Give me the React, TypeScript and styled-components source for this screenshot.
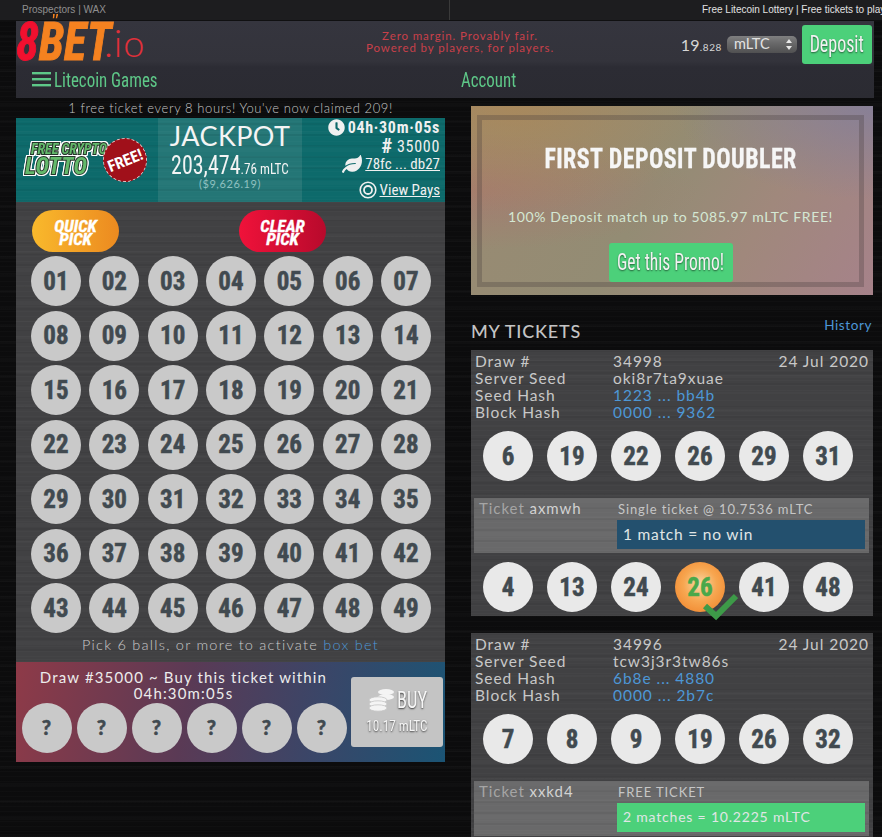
import React from "react";
import styled, { createGlobalStyle } from "styled-components";
import { FaClock, FaLeaf } from "react-icons/fa";

const brushed = `repeating-linear-gradient(0deg, rgba(255,255,255,0.016) 0 1px, rgba(0,0,0,0) 1px 5px),
  repeating-linear-gradient(0deg, rgba(0,0,0,0.05) 0 2px, rgba(0,0,0,0) 2px 11px),
  repeating-linear-gradient(0deg, rgba(255,255,255,0.014) 0 3px, rgba(0,0,0,0) 3px 17px)`;

const narrow = `"Liberation Sans Narrow", "Roboto Condensed", "Liberation Sans", sans-serif`;
const round = `Lato, "Open Sans", sans-serif`;

const GlobalStyle = createGlobalStyle`
  html, body {
    margin: 0;
    padding: 0;
    height: 100%;
    overflow: hidden;
    background-color: #0c0c0d;
    background-image: ${brushed};
    font-family: ${round};
    color: #d8d8d8;
  }
  a { color: inherit; }
`;

const Page = styled.div`
  width: 882px;
  height: 837px;
  overflow: hidden;
`;

const Squeezed = styled.span<{ $x: number; $origin?: string }>`
  display: inline-block;
  white-space: nowrap;
  transform: scaleX(${(p) => p.$x});
  transform-origin: ${(p) => p.$origin ?? "center"};
`;

const TabBar = styled.div`
  height: 20px;
  display: flex;
  background: #1d1d1f;
  border-bottom: 1px solid #101011;
  font-family: "Liberation Sans", sans-serif;
  font-size: 10px;
  line-height: 20px;
`;

const TabLeft = styled.div`
  width: 450px;
  padding-left: 22px;
  box-sizing: border-box;
  color: #8f8f8f;
  border-right: 1px solid #3a3a3a;
`;

const TabRight = styled.div`
  flex: 1;
  padding-left: 252px;
  color: #e2e2e2;
  white-space: nowrap;
  overflow: hidden;
`;

const Header = styled.header`
  margin-left: 16px;
  width: 858px;
  height: 77px;
  background: linear-gradient(180deg, #35353e 0, #33333b 52%, #2c2c34 60%, #2b2b32 100%);
  display: flex;
  flex-direction: column;
`;

const HeaderTop = styled.div`
  height: 42px;
  display: flex;
  align-items: flex-start;
`;

const Logo = styled.div`
  width: 128px;
  height: 42px;
  flex: none;
  display: flex;
  align-items: baseline;
  line-height: 42px;
`;

const LogoMark = styled.div`
  width: 88px;
  flex: none;
  white-space: nowrap;
  font-family: ${narrow};
  font-size: 54px;
  font-weight: 700;
  font-style: italic;
  transform: scaleX(0.86);
  transform-origin: left;
  -webkit-text-stroke: 1px currentColor;
`;

const LogoEight = styled.span`
  color: #f2102f;
`;

const LogoBet = styled.span`
  color: #f58220;
  position: relative;

  &::before {
    content: "";
    position: absolute;
    left: 12px;
    width: 6px;
    height: 46px;
    top: 4px;
    border-left: 2px solid #f58220;
    border-right: 2px solid #f58220;
    box-sizing: border-box;
    transform: skewX(-10deg);
    clip-path: polygon(0 0, 100% 0, 100% 9%, 0 9%, 0 91%, 100% 91%, 100% 100%, 0 100%);
  }
`;

const LogoIo = styled.span`
  color: #e0303a;
  font-weight: 300;
  font-size: 38px;
  line-height: 34px;
  letter-spacing: 1px;
  position: relative;
  top: -3px;
`;

const Tagline = styled.div`
  width: 232px;
  flex: none;
  margin-left: 200px;
  padding-top: 9px;
  text-align: center;
  color: #c8404a;
  font-size: 11.5px;
  line-height: 12px;
  letter-spacing: 0.9px;
`;

const Balance = styled.div`
  margin-left: auto;
  display: flex;
  align-items: center;
  padding: 4px 2px 0 0;
`;

const BalanceValue = styled.span`
  font-size: 16px;
  color: #d6d6d6;
  margin-right: 5px;
  letter-spacing: 0.3px;

  small {
    font-size: 10px;
    letter-spacing: 0.6px;
  }
`;

const CurrencySelect = styled.div`
  width: 70px;
  height: 17px;
  margin-right: 5px;
  padding-left: 7px;
  box-sizing: border-box;
  position: relative;
  border-radius: 5px;
  background: linear-gradient(180deg, #7f7f80 0, #6a6a6b 40%, #505051 100%);
  color: #e2e2e2;
  font-size: 14.5px;
  line-height: 15px;
`;

const SelectArrows = styled.svg`
  position: absolute;
  right: 5px;
  top: 3px;
`;

const GreenButton = styled.button<{ $w: number }>`
  width: ${(p) => p.$w}px;
  height: 39px;
  flex: none;
  border: 0;
  padding: 0;
  display: flex;
  align-items: center;
  justify-content: center;
  border-radius: 3px;
  background: #4cd07a;
  color: #f2f2f2;
  font-family: ${narrow};
  font-size: 23px;
  text-shadow: 0 1px 2px rgba(0, 0, 0, 0.55);
`;

const HeaderNav = styled.nav`
  flex: 1;
  display: flex;
  align-items: center;
  padding-bottom: 2px;
  font-family: ${narrow};
  font-size: 21px;
  color: #5ec888;
`;

const NavMenu = styled.div`
  width: 445px;
  flex: none;
  padding-left: 16px;
  box-sizing: border-box;
  display: flex;
  align-items: center;
  gap: 3px;
`;

const Columns = styled.main`
  display: flex;
  margin-left: 16px;
  width: 858px;
  gap: 26px;
  align-items: flex-start;
`;

const LeftCol = styled.section`
  width: 429px;
  flex: none;
`;

const RightCol = styled.section`
  width: 402px;
  flex: none;
  padding-top: 8px;
`;

const FreeNote = styled.div`
  height: 20px;
  line-height: 21px;
  text-align: center;
  font-size: 13px;
  font-weight: 300;
  letter-spacing: 0.6px;
  color: #c4c4c4;
`;

const Banner = styled.div`
  height: 84px;
  display: flex;
  background: #0d6a6b;
  background-image: ${brushed};
`;

const BannerLogo = styled.div`
  width: 142px;
  position: relative;
  flex: none;
`;

const LottoBadge = styled.div`
  position: absolute;
  left: 9px;
  top: 23px;
  font-family: ${narrow};
  font-style: italic;
  font-weight: 700;
  color: #63b96b;
  white-space: nowrap;
  -webkit-text-stroke: 2px #26352a;
  paint-order: stroke fill;
  filter: drop-shadow(1px 0 0 #fff) drop-shadow(-1px 0 0 #fff) drop-shadow(0 1px 0 #fff)
    drop-shadow(0 -1px 0 #fff);
`;

const LottoSmall = styled.div`
  font-size: 14px;
  line-height: 16px;
  margin-left: 6px;
`;

const LottoBig = styled.div`
  font-size: 23px;
  line-height: 20px;
  letter-spacing: 0.5px;
`;

const FreeSeal = styled.div`
  position: absolute;
  left: 87px;
  top: 20px;
  width: 44px;
  height: 44px;
  box-sizing: border-box;
  border-radius: 50%;
  background: #a0101a;
  border: 1px dashed #ecc0c0;
  color: #fff;
  display: flex;
  align-items: center;
  justify-content: center;
  font-family: ${narrow};
  font-weight: 700;
  font-size: 16px;
  transform: rotate(-22deg);
`;

const JackpotBox = styled.div`
  width: 144px;
  flex: none;
  background: #247676;
  background-image: ${brushed};
  text-align: center;
  color: #f4f4f4;
`;

const JackpotTitle = styled.div`
  font-size: 27px;
  line-height: 27px;
  padding-top: 4px;
  letter-spacing: 0.4px;
`;

const JackpotAmount = styled.div`
  font-family: ${narrow};
  font-size: 25px;
  line-height: 20px;
  margin-top: 7px;
  white-space: nowrap;

  small {
    font-size: 15px;
  }
`;

const JackpotUsd = styled.div`
  font-size: 11px;
  line-height: 10px;
  color: #8fc0c0;
  letter-spacing: 0.6px;
`;

const BannerInfo = styled.div`
  flex: 1;
  padding-right: 5px;
  display: flex;
  flex-direction: column;
  align-items: flex-end;
  font-family: ${narrow};
  color: #f0f0f0;
  font-size: 16px;
  letter-spacing: 0.7px;
`;

const InfoRow = styled.div<{ $h: number; $top?: number }>`
  height: ${(p) => p.$h}px;
  margin-top: ${(p) => p.$top ?? 0}px;
  display: flex;
  align-items: center;
  gap: 3px;
  white-space: nowrap;

  a {
    font-size: 15px;
    letter-spacing: 0;
    text-decoration: underline;
  }
`;

const TimerText = styled.span`
  font-weight: 700;
`;

const Hash = styled.span`
  font-size: 21px;
  font-weight: 700;
  margin-right: 1px;
`;

const Panel = styled.div`
  background-color: #414143;
  background-image: ${brushed};
`;

const PickRow = styled.div`
  height: 46px;
  padding-top: 8px;
  display: flex;
  gap: 120px;
  padding-left: 16px;
`;

const PickButton = styled.button<{ $from: string; $to: string }>`
  width: 87px;
  height: 42px;
  border: 0;
  padding: 3px 0 0;
  border-radius: 21px;
  background: linear-gradient(90deg, ${(p) => p.$from}, ${(p) => p.$to});
  color: #fff;
  font-family: ${narrow};
  font-style: italic;
  font-weight: 700;
  font-size: 17px;
  line-height: 13px;
  -webkit-text-stroke: 0.4px #fff;
`;

const BallGrid = styled.div`
  display: grid;
  grid-template-columns: repeat(7, 50px);
  column-gap: 8.33px;
  row-gap: 4.5px;
  padding-left: 15px;
`;

const Ball = styled.div<{ $tone?: string; $ink?: string }>`
  width: 50px;
  height: 50px;
  flex: none;
  border-radius: 50%;
  background: ${(p) => p.$tone ?? "#c9c9c9"};
  color: ${(p) => p.$ink ?? "#414a50"};
  display: flex;
  align-items: center;
  justify-content: center;
  font-family: ${narrow};
  font-weight: 700;
  font-size: 25px;
  -webkit-text-stroke: 0.5px currentColor;
  position: relative;
`;

const MysteryBall = styled(Ball)`
  font-family: ${round};
  font-weight: 900;
  font-size: 20px;
  padding-bottom: 3px;
  box-sizing: border-box;
`;

const PickHint = styled.div`
  height: 29px;
  line-height: 24px;
  text-align: center;
  font-size: 14.5px;
  font-weight: 300;
  letter-spacing: 1.25px;
  color: #cacaca;

  a {
    color: #4d97d6;
  }
`;

const BuyStrip = styled.div`
  height: 100px;
  display: flex;
  background: linear-gradient(100deg, #8e3a48 0, #5a3a55 40%, #3a4668 70%, #1b5474 100%);
`;

const BuyMain = styled.div`
  width: 335px;
  flex: none;
`;

const BuyTitle = styled.div`
  padding-top: 7px;
  text-align: center;
  font-size: 15px;
  line-height: 16px;
  letter-spacing: 1.15px;
  color: #ececec;
`;

const MysteryRow = styled.div`
  display: flex;
  gap: 5px;
  margin-top: 2px;
  padding-left: 5.5px;
`;

const BuyButton = styled.button`
  width: 92px;
  height: 70px;
  margin-top: 15px;
  border: 0;
  padding: 0;
  display: flex;
  flex-direction: column;
  border-radius: 3px;
  background: #c4c4c4;
  color: #f6f6f6;
  font-family: ${narrow};
  text-shadow: 0 1px 2px rgba(0, 0, 0, 0.7);
`;

const BuyLabel = styled.div`
  display: flex;
  align-items: center;
  justify-content: center;
  gap: 1px;
  font-size: 23px;
  height: 38px;
  padding: 8px 0 0 10px;
  box-sizing: border-box;
`;

const BuyPrice = styled.div`
  font-size: 15px;
  line-height: 20px;
  padding-top: 1px;
  text-align: center;
`;

const PromoCard = styled.div`
  height: 189px;
  padding: 9px 9px 8px 6px;
  box-sizing: border-box;
  background:
    radial-gradient(ellipse at 10% 0, rgba(180, 135, 75, 0.55) 0, rgba(180, 135, 75, 0) 40%),
    radial-gradient(ellipse at 100% 0, rgba(125, 125, 160, 0.7) 0, rgba(125, 125, 160, 0) 35%),
    radial-gradient(ellipse at 0 45%, rgba(170, 115, 110, 0.6) 0, rgba(170, 115, 110, 0) 40%),
    linear-gradient(120deg, #9a8a72 0, #938c74 45%, #a0887c 70%, #a6828a 100%);
`;

const PromoInner = styled.div`
  height: 172px;
  box-sizing: border-box;
  border: 5px solid rgba(70, 60, 60, 0.3);
  text-align: center;
  display: flex;
  flex-direction: column;
  align-items: center;
`;

const PromoTitle = styled.div`
  font-family: ${narrow};
  font-weight: 700;
  font-size: 27px;
  line-height: 27px;
  margin-top: 26px;
  letter-spacing: 0.5px;
  color: #f6f6f6;
  -webkit-text-stroke: 0.3px #f6f6f6;
`;

const PromoText = styled.div`
  font-size: 14px;
  line-height: 16px;
  margin-top: 36px;
  letter-spacing: 0.62px;
  color: #d4e8d4;
`;

const PromoAction = styled.div`
  margin-top: 18px;
`;

const TicketsHead = styled.div`
  height: 55px;
  display: flex;
  justify-content: space-between;
  align-items: flex-end;
`;

const TicketsTitle = styled.h2`
  margin: 0 0 7px;
  font-size: 18px;
  line-height: 24px;
  font-weight: 500;
  letter-spacing: 0.8px;
  color: #c4c4c4;
`;

const HistoryLink = styled.a`
  font-size: 13.5px;
  line-height: 18px;
  padding: 0 1px 16px 0;
  letter-spacing: 0.6px;
  color: #4d97d6;
`;

const TicketCard = styled(Panel)`
  padding: 0 4px 0 3px;
  margin-bottom: 17px;
  height: 266px;
  box-sizing: border-box;
`;

const DrawInfo = styled.div`
  display: grid;
  grid-template-columns: 138px 1fr auto;
  font-size: 15.5px;
  line-height: 17px;
  letter-spacing: 0.95px;
  padding: 3px 0 0 1px;
  color: #c8c8c8;
`;

const Hashes = styled.span`
  color: #4d97d6;
`;

const BallRow = styled.div<{ $top: number }>`
  display: flex;
  justify-content: space-between;
  padding: ${(p) => p.$top}px 16px 0 9px;
`;

const TicketResult = styled.div`
  margin-top: 17px;
  height: 55px;
  background-color: #69696a;
  background-image: ${brushed};
  display: flex;
  padding: 0 4px;
`;

const TicketId = styled.div`
  width: 139px;
  flex: none;
  padding: 1px 0 0 1px;
  box-sizing: border-box;
  font-size: 15px;
  letter-spacing: 0.95px;
  color: #a5a5a5;

  b {
    font-weight: 400;
    color: #d2d2d2;
  }
`;

const TicketPlay = styled.div`
  flex: 1;
`;

const TicketKind = styled.div`
  font-size: 13px;
  line-height: 22px;
  letter-spacing: 0.9px;
  padding-left: 1px;
  color: #c6c6c6;
`;

const Outcome = styled.div<{ $win?: boolean }>`
  height: 28.5px;
  line-height: 28.5px;
  padding-left: 6px;
  font-size: ${(p) => (p.$win ? 14 : 15.5)}px;
  letter-spacing: 0.8px;
  color: #e0e6e6;
  background: ${(p) => (p.$win ? "#4cd07a" : "#23506e")};
`;

const CheckMark = styled.svg`
  position: absolute;
  left: 27px;
  top: 31px;
`;

const pad = (n: number) => String(n).padStart(2, "0");

type Ticket = {
  draw: string;
  seed: string;
  date: string;
  seedHash: string;
  blockHash: string;
  balls: number[];
  id: string;
  kind: string;
  outcome: string;
  win?: boolean;
  picks: number[];
};

const tickets: Ticket[] = [
  {
    draw: "34998",
    seed: "oki8r7ta9xuae",
    date: "24 Jul 2020",
    seedHash: "1223 ... bb4b",
    blockHash: "0000 ... 9362",
    balls: [6, 19, 22, 26, 29, 31],
    id: "axmwh",
    kind: "Single ticket @ 10.7536 mLTC",
    outcome: "1 match = no win",
    picks: [4, 13, 24, 26, 41, 48],
  },
  {
    draw: "34996",
    seed: "tcw3j3r3tw86s",
    date: "24 Jul 2020",
    seedHash: "6b8e ... 4880",
    blockHash: "0000 ... 2b7c",
    balls: [7, 8, 9, 19, 26, 32],
    id: "xxkd4",
    kind: "FREE TICKET",
    outcome: "2 matches = 10.2225 mLTC",
    win: true,
    picks: [],
  },
];

const Coins = () => (
  <svg width="27" height="24" viewBox="0 0 27 24" fill="#f4f4f4">
    <ellipse cx="17" cy="4" rx="8" ry="3" />
    <ellipse cx="17" cy="9" rx="8" ry="3" />
    <ellipse cx="9" cy="12" rx="9" ry="3.2" stroke="#c4c4c4" strokeWidth="0.8" />
    <ellipse cx="9" cy="16" rx="9" ry="3.2" stroke="#c4c4c4" strokeWidth="0.8" />
    <ellipse cx="9" cy="20" rx="9" ry="3.2" stroke="#c4c4c4" strokeWidth="0.8" />
  </svg>
);

const Target = () => (
  <svg width="18" height="18" viewBox="0 0 18 18" fill="none" stroke="#f0f0f0">
    <circle cx="9" cy="9" r="7.8" strokeWidth="1.6" />
    <circle cx="9" cy="9" r="4" strokeWidth="1.8" />
  </svg>
);

const Burger = () => (
  <svg width="19" height="17" viewBox="0 0 19 17" fill="#5ec888">
    <rect y="1" width="19" height="2.4" />
    <rect y="7" width="19" height="2.4" />
    <rect y="13" width="19" height="2.4" />
  </svg>
);

const TicketBlock = ({ t }: { t: Ticket }) => (
  <TicketCard>
    <DrawInfo>
      <span>Draw #</span>
      <span>{t.draw}</span>
      <span>{t.date}</span>
      <span>Server Seed</span>
      <span>{t.seed}</span>
      <span />
      <span>Seed Hash</span>
      <Hashes>{t.seedHash}</Hashes>
      <span />
      <span>Block Hash</span>
      <Hashes>{t.blockHash}</Hashes>
      <span />
    </DrawInfo>
    <BallRow $top={10}>
      {t.balls.map((b) => (
        <Ball key={b} $tone="#e9e9e9">
          {b}
        </Ball>
      ))}
    </BallRow>
    <TicketResult>
      <TicketId>
        Ticket <b>{t.id}</b>
      </TicketId>
      <TicketPlay>
        <TicketKind>{t.kind}</TicketKind>
        <Outcome $win={t.win}>{t.outcome}</Outcome>
      </TicketPlay>
    </TicketResult>
    {t.picks.length > 0 && (
      <BallRow $top={9}>
        {t.picks.map((b) => {
          const hit = b === 26;
          return (
            <Ball
              key={b}
              $tone={hit ? "radial-gradient(circle at 50% 45%, #f8d9a8 0, #f7a650 45%, #ef7d24 100%)" : "#e9e9e9"}
              $ink={hit ? "#4aa84a" : undefined}
            >
              {b}
              {hit && (
                <CheckMark width="36" height="28" viewBox="0 0 36 28">
                  <path d="M3 13l11 10L34 3" fill="none" stroke="#3d9a48" strokeWidth="6" />
                </CheckMark>
              )}
            </Ball>
          );
        })}
      </BallRow>
    )}
  </TicketCard>
);

export default function App() {
  return (
    <Page>
      <GlobalStyle />
      <TabBar>
        <TabLeft>Prospectors | WAX</TabLeft>
        <TabRight>Free Litecoin Lottery | Free tickets to play</TabRight>
      </TabBar>
      <Header>
        <HeaderTop>
          <Logo>
            <LogoMark>
              <LogoEight>8</LogoEight>
              <LogoBet>BET</LogoBet>
            </LogoMark>
            <LogoIo>.io</LogoIo>
          </Logo>
          <Tagline>
            Zero margin. Provably fair.
            <br />
            Powered by players, for players.
          </Tagline>
          <Balance>
            <BalanceValue>
              19<small>.828</small>
            </BalanceValue>
            <CurrencySelect>
              mLTC
              <SelectArrows width="6" height="11" viewBox="0 0 6 11" fill="#e8e8e8">
                <path d="M3 0l3 4H0zM3 11L0 7h6z" />
              </SelectArrows>
            </CurrencySelect>
            <GreenButton $w={70}>
              <Squeezed $x={0.78}>Deposit</Squeezed>
            </GreenButton>
          </Balance>
        </HeaderTop>
        <HeaderNav>
          <NavMenu>
            <Burger />
            <Squeezed $x={0.805} $origin="left">
              Litecoin Games
            </Squeezed>
          </NavMenu>
          <Squeezed $x={0.805} $origin="left">
            Account
          </Squeezed>
        </HeaderNav>
      </Header>
      <Columns>
        <LeftCol>
          <FreeNote>1 free ticket every 8 hours! You've now claimed 209!</FreeNote>
          <Banner>
            <BannerLogo>
              <LottoBadge>
                <LottoSmall>FREE CRYPTO</LottoSmall>
                <LottoBig>LOTTO</LottoBig>
              </LottoBadge>
              <FreeSeal>FREE!</FreeSeal>
            </BannerLogo>
            <JackpotBox>
              <JackpotTitle>JACKPOT</JackpotTitle>
              <JackpotAmount>
                <Squeezed $x={0.88}>
                  203,474<small>.76 mLTC</small>
                </Squeezed>
              </JackpotAmount>
              <JackpotUsd>($9,626.19)</JackpotUsd>
            </JackpotBox>
            <BannerInfo>
              <InfoRow $h={18}>
                <FaClock size={17} />
                <TimerText>04h·30m·05s</TimerText>
              </InfoRow>
              <InfoRow $h={20}>
                <Hash>#</Hash>35000
              </InfoRow>
              <InfoRow $h={16}>
                <FaLeaf size={20} />
                <a>78fc ... db27</a>
              </InfoRow>
              <InfoRow $h={26} $top={5}>
                <Target />
                <a>View Pays</a>
              </InfoRow>
            </BannerInfo>
          </Banner>
          <Panel>
            <PickRow>
              <PickButton $from="#f9b92c" $to="#ec8a20">
                QUICK
                <br />
                PICK
              </PickButton>
              <PickButton $from="#f0123a" $to="#b80a2c">
                CLEAR
                <br />
                PICK
              </PickButton>
            </PickRow>
            <BallGrid>
              {Array.from({ length: 49 }, (_, i) => (
                <Ball key={i}>{pad(i + 1)}</Ball>
              ))}
            </BallGrid>
            <PickHint>
              Pick 6 balls, or more to activate <a>box bet</a>
            </PickHint>
          </Panel>
          <BuyStrip>
            <BuyMain>
              <BuyTitle>Draw #35000 ~ Buy this ticket within 04h:30m:05s</BuyTitle>
              <MysteryRow>
                {[0, 1, 2, 3, 4, 5].map((i) => (
                  <MysteryBall key={i}>?</MysteryBall>
                ))}
              </MysteryRow>
            </BuyMain>
            <BuyButton>
              <BuyLabel>
                <Coins />
                <Squeezed $x={0.8} $origin="left">
                  BUY
                </Squeezed>
              </BuyLabel>
              <BuyPrice>
                <Squeezed $x={0.88}>10.17 mLTC</Squeezed>
              </BuyPrice>
            </BuyButton>
          </BuyStrip>
        </LeftCol>
        <RightCol>
          <PromoCard>
            <PromoInner>
              <PromoTitle>
                <Squeezed $x={0.885}>FIRST DEPOSIT DOUBLER</Squeezed>
              </PromoTitle>
              <PromoText>100% Deposit match up to 5085.97 mLTC FREE!</PromoText>
              <PromoAction>
                <GreenButton $w={124}>
                  <Squeezed $x={0.76}>Get this Promo!</Squeezed>
                </GreenButton>
              </PromoAction>
            </PromoInner>
          </PromoCard>
          <TicketsHead>
            <TicketsTitle>MY TICKETS</TicketsTitle>
            <HistoryLink>History</HistoryLink>
          </TicketsHead>
          {tickets.map((t) => (
            <TicketBlock key={t.id} t={t} />
          ))}
        </RightCol>
      </Columns>
    </Page>
  );
}
